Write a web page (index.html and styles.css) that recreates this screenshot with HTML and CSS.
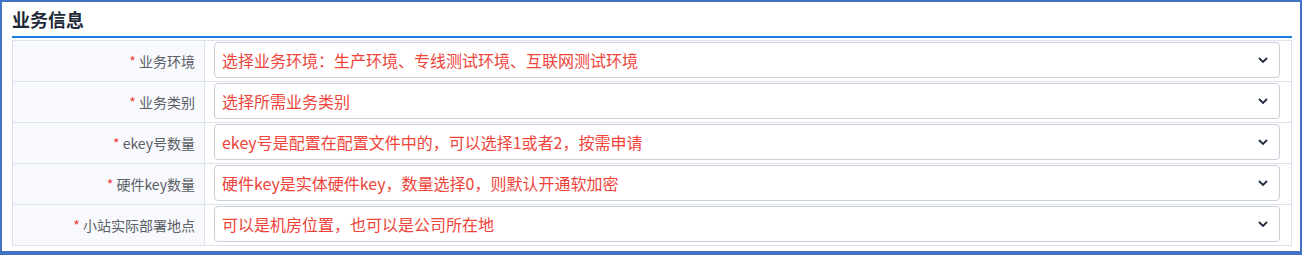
FILE: index.html
```html
<!DOCTYPE html>
<html lang="zh-CN">
<head>
    <meta charset="UTF-8">
    <meta name="viewport" content="width=device-width, initial-scale=1.0">
    <title>业务信息</title>
    <link rel="stylesheet" href="styles.css">
</head>
<body>
    <div class="frame">
        <h3 class="section-title">业务信息</h3>
        <table class="form-table">
            <tr>
                <td class="label"><span class="req">*</span> 业务环境</td>
                <td class="value">
                    <div class="select"><span>选择业务环境：生产环境、专线测试环境、互联网测试环境</span>
                        <svg class="chev" width="10" height="6" viewBox="0 0 10 6"><path d="M1 1l4 4 4-4" fill="none" stroke="#1f2d3d" stroke-width="1.8"/></svg></div>
                </td>
            </tr>
            <tr>
                <td class="label"><span class="req">*</span> 业务类别</td>
                <td class="value">
                    <div class="select"><span>选择所需业务类别</span>
                        <svg class="chev" width="10" height="6" viewBox="0 0 10 6"><path d="M1 1l4 4 4-4" fill="none" stroke="#1f2d3d" stroke-width="1.8"/></svg></div>
                </td>
            </tr>
            <tr>
                <td class="label"><span class="req">*</span> ekey号数量</td>
                <td class="value">
                    <div class="select"><span>ekey号是配置在配置文件中的，可以选择1或者2，按需申请</span>
                        <svg class="chev" width="10" height="6" viewBox="0 0 10 6"><path d="M1 1l4 4 4-4" fill="none" stroke="#1f2d3d" stroke-width="1.8"/></svg></div>
                </td>
            </tr>
            <tr>
                <td class="label"><span class="req">*</span> 硬件key数量</td>
                <td class="value">
                    <div class="select"><span>硬件key是实体硬件key，数量选择0，则默认开通软加密</span>
                        <svg class="chev" width="10" height="6" viewBox="0 0 10 6"><path d="M1 1l4 4 4-4" fill="none" stroke="#1f2d3d" stroke-width="1.8"/></svg></div>
                </td>
            </tr>
            <tr>
                <td class="label"><span class="req">*</span> 小站实际部署地点</td>
                <td class="value">
                    <div class="select"><span>可以是机房位置，也可以是公司所在地</span>
                        <svg class="chev" width="10" height="6" viewBox="0 0 10 6"><path d="M1 1l4 4 4-4" fill="none" stroke="#1f2d3d" stroke-width="1.8"/></svg></div>
                </td>
            </tr>
        </table>
    </div>
</body>
</html>
```

FILE: styles.css
```css
/* formulário de informações do negócio */
body { margin: 0; background: #fff; font-family: "Noto Sans CJK SC", "Noto Sans", sans-serif; }
.frame { box-sizing: border-box; width: 1302px; height: 255px; border: 2px solid #4472c4; border-bottom-width: 4px; padding: 0 8px 0 10px; }
.section-title { margin: 0; padding: 6px 0 6px; font-size: 18px; line-height: 22px; font-weight: bold; color: #1e2a3a; border-bottom: 2px solid #1a7ee6; }
.form-table { width: 100%; margin-top: 2px; border-collapse: collapse; border: 1px solid #dde3ee; }
.form-table td { border: 1px solid #dde3ee; height: 40px; box-sizing: border-box; }
.label { width: 192px; background: #f8f9fd; text-align: right; padding: 0 9px 0 0; font-size: 14px; color: #5a5e66; }
.req { color: #f23b3b; }
.value { padding: 1px 11px 3px 9px; background: #fff; }
.select { height: 36px; box-sizing: border-box; border: 1px solid #c9ced9; border-radius: 4px; display: flex; align-items: center; justify-content: space-between; padding: 0 11px 0 7px; font-size: 16px; color: #f0433a; }
.chev { display: block; }
```
